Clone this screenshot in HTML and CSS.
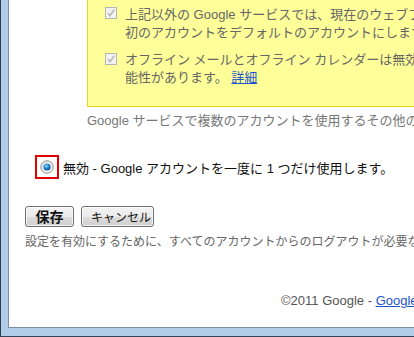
FILE: index.html
```html
<!DOCTYPE html>
<html lang="ja">
<head>
    <meta charset="UTF-8">
    <title>複数アカウントの設定</title>
    <link rel="stylesheet" href="styles.css">
</head>
<body>
    <div class="frame">
        <div class="content">
            <!-- 注意ボックス -->
            <div class="notice">
                <div class="check-row">
                    <svg class="checkbox" width="12" height="12" viewBox="0 0 12 12">
                        <rect x="0.5" y="0.5" width="11" height="11" fill="#f2f2f2" stroke="#b5b5b5"/>
                        <path d="M3 6.2 L5 8.6 L9.2 2.8" fill="none" stroke="#b8b8b8" stroke-width="1.6"/>
                    </svg>
                    <div class="check-text">
                        上記以外の Google サービスでは、現在のウェブブラウザでログインした最<br>
                        初のアカウントをデフォルトのアカウントにします。
                    </div>
                </div>
                <div class="check-row">
                    <svg class="checkbox" width="12" height="12" viewBox="0 0 12 12">
                        <rect x="0.5" y="0.5" width="11" height="11" fill="#f2f2f2" stroke="#b5b5b5"/>
                        <path d="M3 6.2 L5 8.6 L9.2 2.8" fill="none" stroke="#b8b8b8" stroke-width="1.6"/>
                    </svg>
                    <div class="check-text">
                        オフライン メールとオフライン カレンダーは無効になる可<br>
                        能性があります。 <a href="#">詳細</a>
                    </div>
                </div>
            </div>

            <p class="other-note">Google サービスで複数のアカウントを使用するその他の方法について</p>

            <label class="radio-row">
                <span class="radio-box">
                    <svg width="14" height="14" viewBox="0 0 14 14">
                        <defs>
                            <radialGradient id="dot" cx="0.4" cy="0.35" r="0.7">
                                <stop offset="0" stop-color="#8fd8ff"/>
                                <stop offset="0.5" stop-color="#1f87d0"/>
                                <stop offset="1" stop-color="#0c4d8c"/>
                            </radialGradient>
                            <linearGradient id="ring" x1="0" y1="0" x2="1" y2="1">
                                <stop offset="0" stop-color="#e6e6e6"/>
                                <stop offset="1" stop-color="#fafafa"/>
                            </linearGradient>
                        </defs>
                        <circle cx="7" cy="7" r="6.2" fill="url(#ring)" stroke="#8c8c8c"/>
                        <circle cx="7" cy="7" r="3.6" fill="url(#dot)"/>
                    </svg>
                </span>
                <span>無効 - Google アカウントを一度に 1 つだけ使用します。</span>
            </label>

            <div class="buttons">
                <button class="btn btn-save">保存</button>
                <button class="btn">キャンセル</button>
            </div>

            <p class="hint">設定を有効にするために、すべてのアカウントからのログアウトが必要な場合があります。</p>

            <div class="footer">©2011 Google - <a href="#">Google ホーム</a></div>
        </div>
    </div>
</body>
</html>
```

FILE: styles.css
```css
body {
    margin: 0;
    font-family: 'Liberation Sans', Arial, 'Noto Sans CJK JP', sans-serif;
    font-size: 13px;
    color: #222;
    overflow: hidden;
}
.frame {
    height: 337px;
    box-sizing: border-box;
    background-color: #b3cde9;
    border-left: 1px solid #2c3d52;
    border-bottom: 1px solid #34465c;
    padding-left: 7px;
    padding-bottom: 8px;
    white-space: nowrap;
    overflow: hidden;
}
.content {
    height: 328px;
    box-sizing: border-box;
    background-color: #fff;
    border-left: 1px solid #7d8fa4;
    border-bottom: 1px solid #7d8fa4;
    padding-left: 16px;
    overflow: hidden;
}
.notice {
    width: 600px;
    margin-left: 62px;
    padding: 6px 0 19px 17px;
    background-color: #ffff99;
    border-left: 1px solid #f2d41c;
    border-bottom: 1px solid #f2d41c;
}
.check-row {
    display: flex;
    gap: 8px;
    margin-bottom: 9px;
}
.check-row:last-child {
    margin-bottom: 0;
}
.checkbox {
    flex: none;
    margin-top: 1px;
}
.check-row + .check-row .checkbox {
    margin-top: 2px;
}
.check-text {
    color: #666;
    line-height: 18px;
}
a {
    color: #2255cc;
    text-decoration: underline;
}
.other-note {
    margin: 5px 0 0 62px;
    line-height: 18px;
    color: #777;
}
.radio-row {
    display: flex;
    align-items: center;
    gap: 4px;
    margin: 25px 0 0 10px;
    color: #111;
}
.radio-box {
    width: 20px;
    height: 20px;
    border: 2px solid #e00000;
    display: flex;
    align-items: center;
    justify-content: center;
}
.buttons {
    display: flex;
    gap: 7px;
    margin-top: 27px;
}
.btn {
    height: 21px;
    padding: 0 9px;
    border: 1px solid #707070;
    border-radius: 3px;
    background: linear-gradient(#f3f3f3 0%, #ebebeb 50%, #dcdcdc 51%, #cfcfcf 100%);
    box-shadow: inset 0 0 0 1px rgba(255, 255, 255, 0.7);
    font-family: 'Noto Sans CJK JP', sans-serif;
    font-size: 12px;
    line-height: 17px;
    color: #111;
}
.btn-save {
    width: 49px;
    font-size: 14px;
    font-weight: bold;
}
.btn + .btn {
    width: 73px;
}
.hint {
    margin: 7px 0 0;
    font-size: 12px;
    line-height: 16px;
    color: #666;
}
.footer {
    margin: 42px 0 0 256px;
    line-height: 18px;
    color: #555;
}
```
